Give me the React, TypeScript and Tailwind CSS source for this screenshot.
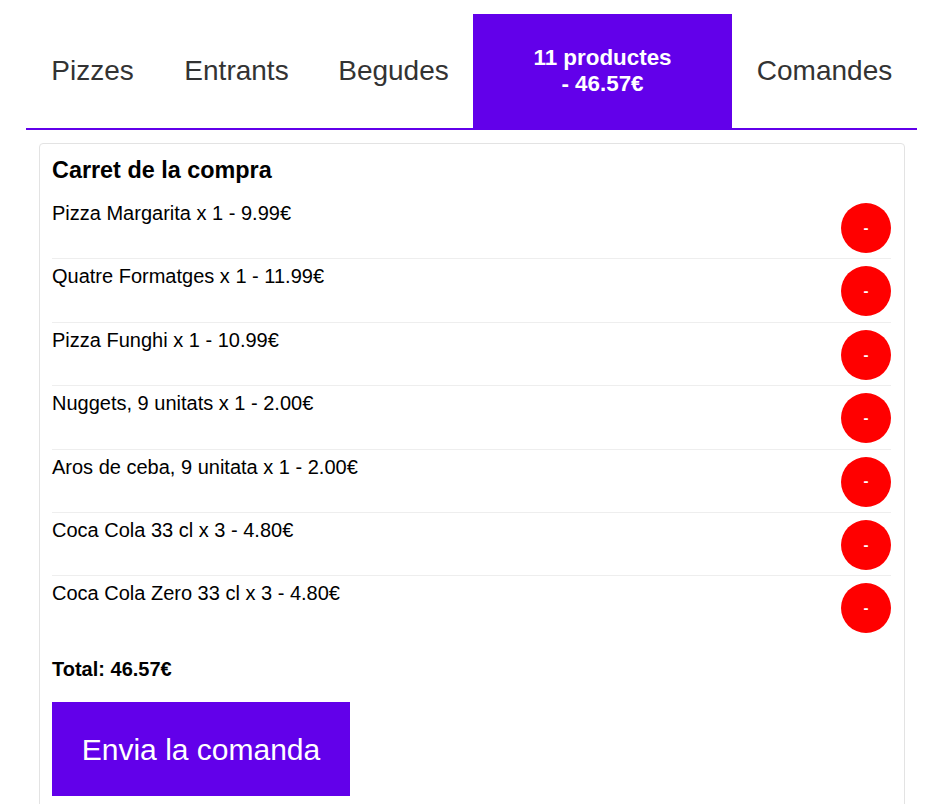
import React from "react";

type Item = {
  name: string;
  qty: number;
  price: string;
};

const items: Item[] = [
  { name: "Pizza Margarita", qty: 1, price: "9.99" },
  { name: "Quatre Formatges", qty: 1, price: "11.99" },
  { name: "Pizza Funghi", qty: 1, price: "10.99" },
  { name: "Nuggets, 9 unitats", qty: 1, price: "2.00" },
  { name: "Aros de ceba, 9 unitata", qty: 1, price: "2.00" },
  { name: "Coca Cola 33 cl", qty: 3, price: "4.80" },
  { name: "Coca Cola Zero 33 cl", qty: 3, price: "4.80" },
];

const tabs = [
  { label: "Pizzes", width: "w-[133px]" },
  { label: "Entrants", width: "w-[155px]" },
  { label: "Begudes", width: "w-[159px]" },
];

const App = () => {
  return (
    <div
      className="min-h-screen bg-white pt-[14px]"
      style={{ fontFamily: '"Liberation Sans", Arial, sans-serif' }}
    >
      <div className="mx-[26px] w-[891px]">
        <div className="flex h-[116px] flex-row items-stretch border-b-2 border-[#6200ea]">
          {tabs.map((tab) => (
            <button
              key={tab.label}
              className={`flex items-center justify-center text-[28px] text-[#333] ${tab.width}`}
            >
              {tab.label}
            </button>
          ))}
          <button className="flex w-[259px] flex-col items-center justify-center bg-[#6200ea] text-[22.4px] font-bold leading-[26px] text-white">
            <span>11 productes</span>
            <span>- 46.57€</span>
          </button>
          <button className="flex flex-1 items-center justify-center text-[28px] text-[#333]">
            Comandes
          </button>
        </div>

        <div className="mt-[13px] mr-[12px] ml-[13px] h-[700px] rounded-[4px] border border-[#e3e3e3] pt-[13px] pr-[13px] pl-[12px]">
          <p className="text-[23.4px] font-bold leading-[27px] text-black">
            Carret de la compra
          </p>
          <div className="mt-[12px]">
            {items.map((item, i) => (
              <div
                key={item.name}
                className={`flex flex-row items-start justify-between pt-[6px] pb-[5.4px] ${
                  i < items.length - 1 ? "border-b border-[#eeeeee]" : ""
                }`}
              >
                <p className="text-[20px] leading-[23px] text-black">
                  {item.name} x {item.qty} - {item.price}€
                </p>
                <button className="mt-[1px] flex h-[50px] w-[50px] items-center justify-center rounded-full bg-[#ff0000] text-[15px] font-bold text-white">
                  -
                </button>
              </div>
            ))}
          </div>
          <p className="mt-[19px] text-[20px] font-bold leading-[23px] text-black">
            Total: 46.57€
          </p>
          <button className="mt-[21.5px] h-[94px] w-[298px] bg-[#6200ea] text-[30px] text-white">
            Envia la comanda
          </button>
        </div>
      </div>
    </div>
  );
};

export default App;
